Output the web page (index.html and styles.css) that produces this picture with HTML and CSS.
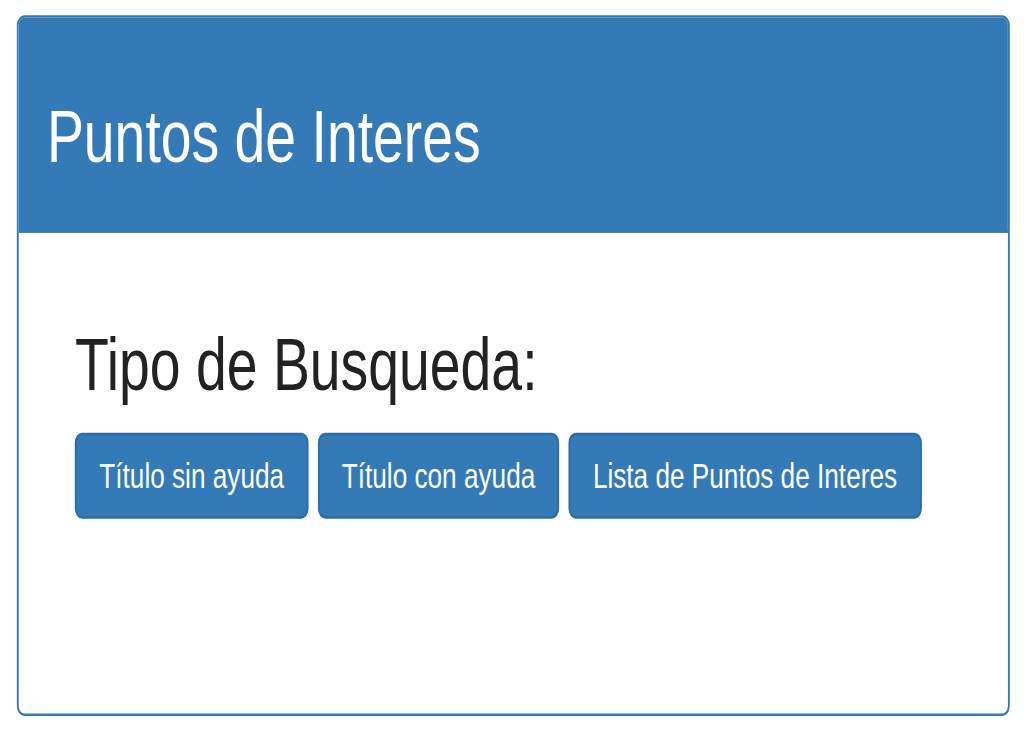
FILE: index.html
```html
<!DOCTYPE html>
<html lang="es">
<head>
<meta charset="utf-8">
<title>Puntos de Interes</title>
<link rel="stylesheet" href="styles.css">
</head>
<body>
<div class="stage">
  <div class="panel">
    <div class="panel-heading">
      <h2 class="panel-title">Puntos de Interes</h2>
    </div>
    <div class="panel-body">
      <div class="container">
        <h2 class="section-title">Tipo de Busqueda:</h2>
        <div class="btn-row">
          <button class="btn" type="button">Título sin ayuda</button>
          <button class="btn" type="button">Título con ayuda</button>
          <button class="btn" type="button">Lista de Puntos de Interes</button>
        </div>
      </div>
    </div>
  </div>
</div>
</body>
</html>
```
FILE: styles.css
```css
html {
  overflow: hidden;
  background: #ffffff;
}

body {
  margin: 0;
  padding: 0;
  min-height: 740px;
  font-family: "Liberation Sans", Arial, sans-serif;
  font-size: 14px;
  line-height: 1.42857;
  color: #333333;
}

/* The reference is a stretched capture of a Bootstrap panel */
.stage {
  width: 548px;
  transform: scale(1.87, 2.53);
  transform-origin: 0 0;
  padding: 6.3px 0 0 9.1px;
}

.panel {
  width: 530.5px;
  box-sizing: border-box;
  border: 1px solid #337ab7;
  border-radius: 4px;
  background: #ffffff;
  overflow: hidden;
}

.panel-heading {
  background: #337ab7;
  color: #ffffff;
  padding: 10px 15px;
  border-bottom: 1px solid #337ab7;
}

.panel-title {
  margin: 20px 0 10px;
  font-size: 29.6px;
  line-height: 34px;
  font-weight: 400;
  color: #ffffff;
}

.panel-body {
  padding: 15px 15px 77px;
}

.container {
  padding: 0 15px;
}

.section-title {
  margin: 20px 0 10.2px;
  font-size: 29.6px;
  line-height: 34px;
  font-weight: 400;
  color: #222222;
}

.btn-row {
  display: flex;
  gap: 4.8px;
}

.btn {
  font-family: inherit;
  font-size: 14px;
  line-height: 20px;
  padding: 6px 12px;
  color: #ffffff;
  background: #337ab7;
  border: 1px solid #2e6da4;
  border-radius: 4px;
  white-space: nowrap;
  cursor: pointer;
}
```
